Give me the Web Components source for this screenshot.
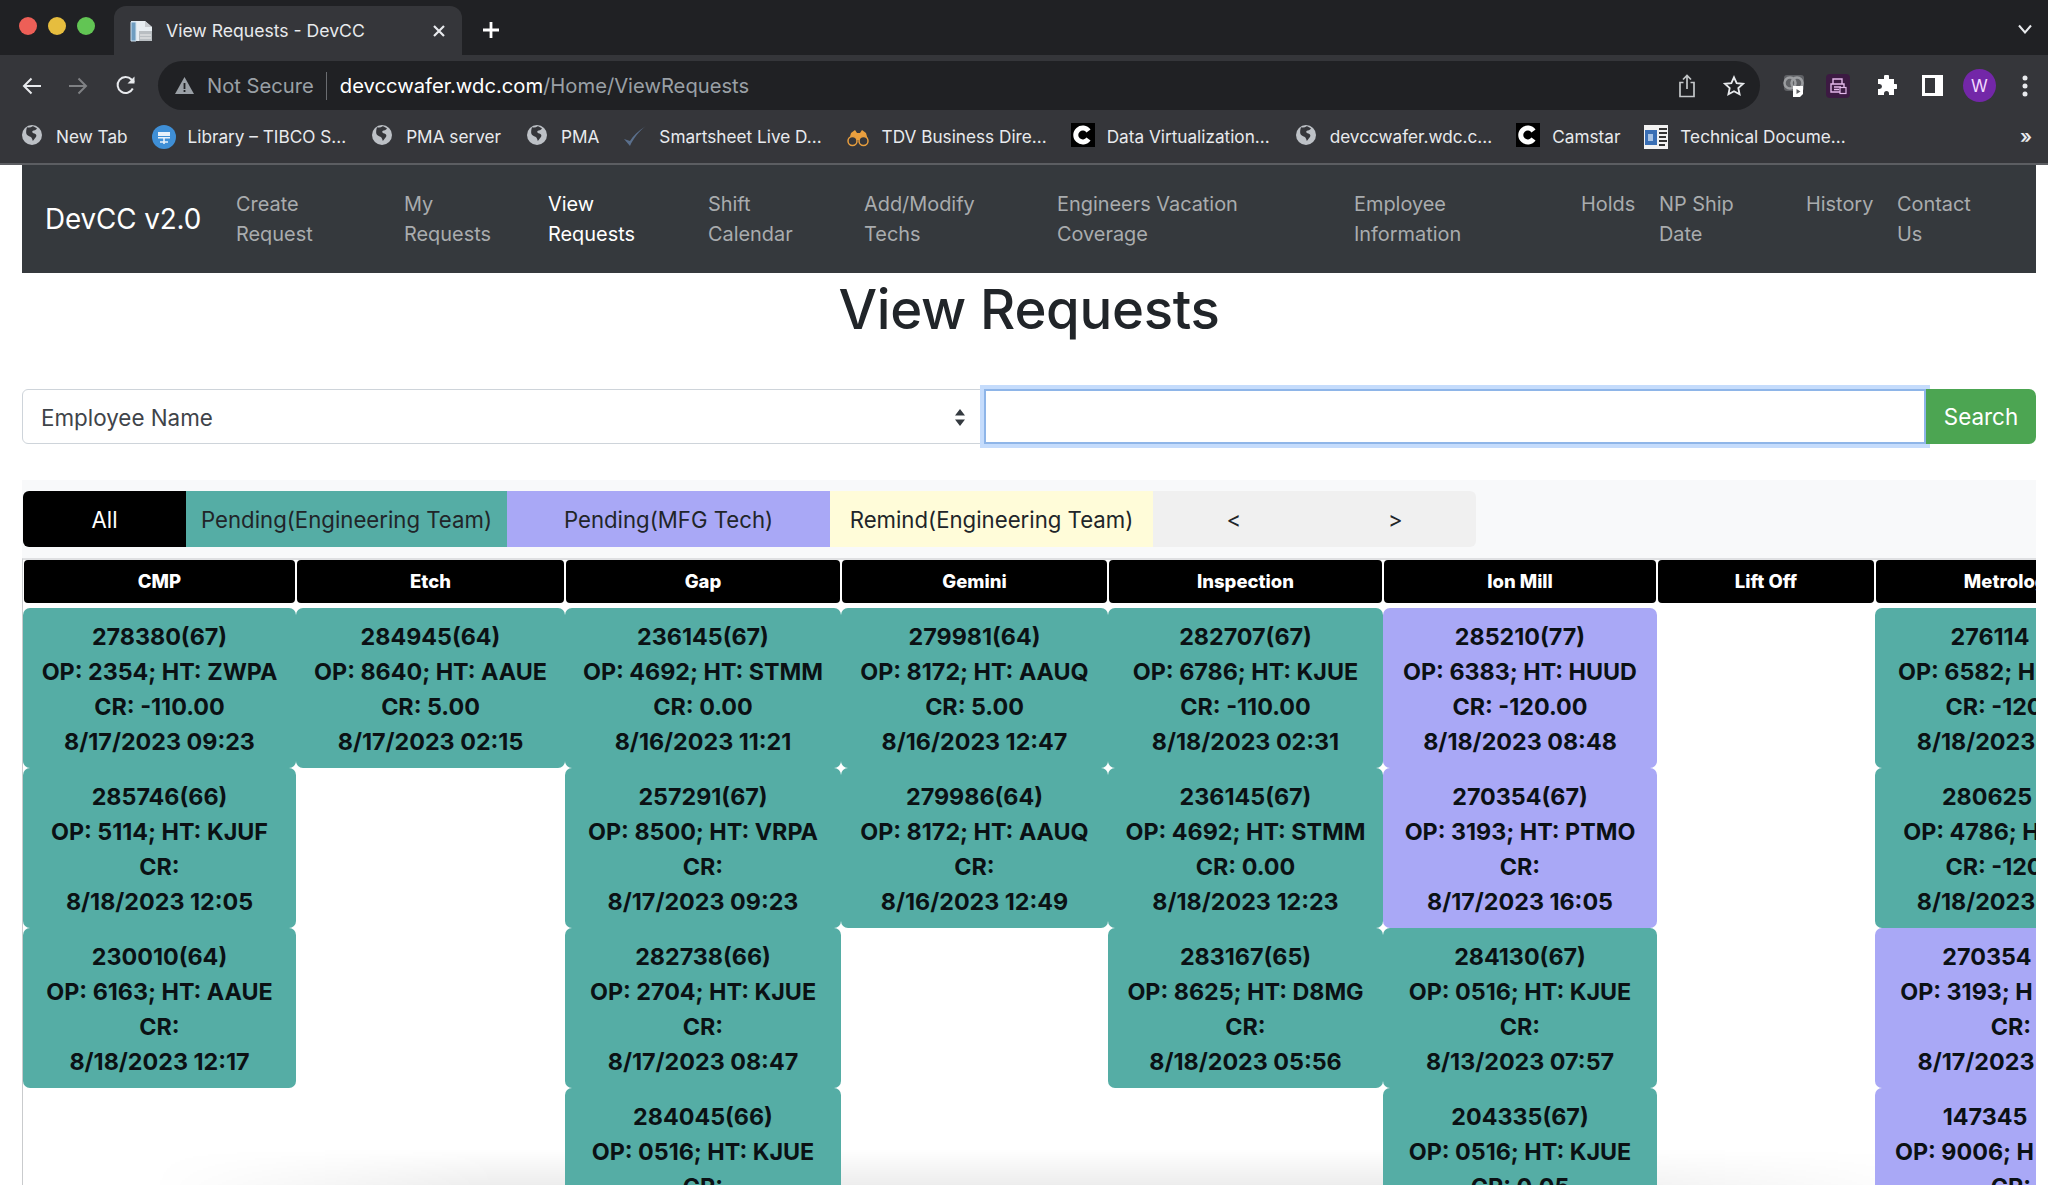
<!DOCTYPE html>
<html lang="en"><head><meta charset="utf-8"><title>View Requests - DevCC</title>
<style>html,body{margin:0;padding:0;background:#fff;font-family:Inter,"Liberation Sans",sans-serif}</style>
</head><body>
<app-page>
  <browser-chrome></browser-chrome>
  <dev-nav>
    <nav-link>Create<br>Request</nav-link>
    <nav-link>My<br>Requests</nav-link>
    <nav-link active>View<br>Requests</nav-link>
    <nav-link>Shift<br>Calendar</nav-link>
    <nav-link>Add/Modify<br>Techs</nav-link>
    <nav-link>Engineers Vacation<br>Coverage</nav-link>
    <nav-link>Employee<br>Information</nav-link>
    <nav-link>Holds</nav-link>
    <nav-link>NP Ship<br>Date</nav-link>
    <nav-link>History</nav-link>
    <nav-link>Contact<br>Us</nav-link>
  </dev-nav>
  <page-heading>View Requests</page-heading>
  <search-bar></search-bar>
  <status-filter>
    <filter-tab tone="all">All</filter-tab>
    <filter-tab tone="eng">Pending(Engineering Team)</filter-tab>
    <filter-tab tone="mfg">Pending(MFG Tech)</filter-tab>
    <filter-tab tone="remind">Remind(Engineering Team)</filter-tab>
    <filter-tab tone="nav">&lt;</filter-tab>
    <filter-tab tone="navend">&gt;</filter-tab>
  </status-filter>
  <request-board></request-board>
</app-page>

<script>
const def=(name,css,html,extra)=>{
  const t=document.createElement('template');
  t.innerHTML=`<style>${css}</style>${html}`;
  customElements.define(name,class extends HTMLElement{
    constructor(){super();this.attachShadow({mode:'open'}).appendChild(t.content.cloneNode(true));}
    connectedCallback(){if(extra)extra.call(this);}
  });
};

const globe=`<svg width="22" height="22" viewBox="0 0 22 22"><circle cx="11" cy="11" r="10" fill="#bdc1c6"/><path d="M6 3.2c2 .6 4 .3 5.6-.9 1.6.4 3.2 1.2 4.4 2.3-1 1.6-3 2-4.600 2.300-.6 1.400.6 2.200 2 2.600 1.600.5 2.400 1.700 1.800 3-1 1.800-2.200 3-3.400 4.600-.4-1.800-.8-3.400-2.400-4.400-1.700-.6-3.600-1.300-4.100-3.200C5 8 5.200 5.300 6 3.200z" fill="#35363a"/></svg>`;
const cLogo=`<svg width="24" height="24" viewBox="0 0 24 24"><rect width="24" height="24" fill="#000"/><path d="M17.500 8a7 7 0 1 0 0 8" fill="none" stroke="#fff" stroke-width="5"/></svg>`;

def('app-page',`:host{display:block;position:relative;width:2048px;height:1185px;overflow:hidden;background:#fff;font-family:Inter,"Liberation Sans",sans-serif;color:#212529}
.shade{position:absolute;left:0;right:0;bottom:0;height:36px;background:linear-gradient(to bottom,rgba(0,0,0,0),rgba(0,0,0,.07));-webkit-mask-image:linear-gradient(to right,transparent 150px,#000 500px,#000 1500px,transparent 1950px);mask-image:linear-gradient(to right,transparent 150px,#000 500px,#000 1500px,transparent 1950px);z-index:0;pointer-events:none}`,
`<slot></slot><div class="shade"></div>`);

def('bm-item',`:host{display:flex;align-items:center;gap:12px;color:#e8eaed;font-size:17.200px;white-space:nowrap}
.i{width:24px;height:24px;display:flex;align-items:center;justify-content:center}`,
`<span class="i"><slot name="icon"></slot></span><slot></slot>`);

def('browser-chrome',`:host{display:block;height:165px;background:#35363a;color:#e8eaed;box-sizing:border-box;border-bottom:2px solid #5c5e62;font-size:18px}
.strip{height:55px;background:#202124;display:flex;align-items:flex-end;position:relative}
.lights{display:flex;gap:11px;padding:0 0 20px 19px;width:96px;box-sizing:border-box;align-self:flex-end}
.lights i{width:18px;height:18px;border-radius:50%;flex:none}
.tab{width:348px;height:49px;background:#35363a;border-radius:12px 12px 0 0;display:flex;align-items:center;box-sizing:border-box;padding:0 16px;gap:12px;color:#e8eaed;font-size:17.600px;margin-left:18px}
.tab span{flex:1}
.plus{margin:0 0 3px 20px;height:44px;display:flex;align-items:center}
.chev{position:absolute;right:15px;top:24px}
.tool{height:55px;display:flex;align-items:flex-end;gap:0;padding-left:22px;box-sizing:border-box}
.nav{display:flex;align-items:center;height:49px;gap:26px;width:136px;flex:none}
.omni{flex:none;width:1602px;height:49px;background:#202124;border-radius:25px;display:flex;align-items:center;padding:0 16px 0 17px;box-sizing:border-box;font-size:20.200px;color:#9aa0a6;white-space:nowrap}
.omni b{font-weight:400;color:#fff}
.omni em{font-style:normal;width:1px;height:28px;background:#6a6c70;margin:0 13px 0 12px}
.omni .sp{flex:1}
.omni svg.w{margin-right:13px}
.ext{display:flex;align-items:center;height:49px;flex:none;padding-left:23px}
.bars{height:53px;display:flex;align-items:center;padding:0 16px 0 20px;gap:24px;position:relative}
.more{margin-left:auto;font-size:19px;color:#e8eaed;font-weight:600}
.ext>*{flex:none}
.ava{margin-left:20px;width:33px;height:33px;border-radius:50%;background:#7327a8;color:#f2d9ff;font-size:17px;display:flex;align-items:center;justify-content:center}`,
`<div class="strip">
  <div class="lights"><i style="background:#ed5f57"></i><i style="background:#e6bd3e"></i><i style="background:#62c554"></i></div>
  <div class="tab">
    <svg width="24" height="24" viewBox="0 0 24 24"><path d="M1 2h14l7 6v14H1z" fill="#e8eef2"/><path d="M1 3h5v19H1z" fill="#6f9dc0" stroke="#cfe0ee"/><path d="M9 12h13v10H9z" fill="#b9bec2"/><path d="M15 2v6h7" fill="#c8ccd0"/><path d="M10 16h11M10 19h11" stroke="#eee"/></svg>
    <span>View Requests - DevCC</span>
    <svg width="14" height="14" viewBox="0 0 14 14"><path d="M2 2l10 10M12 2L2 12" stroke="#e8eaed" stroke-width="2.200"/></svg>
  </div>
  <div class="plus"><svg width="18" height="18" viewBox="0 0 18 18"><path d="M9 1v16M1 9h16" stroke="#fff" stroke-width="2.800"/></svg></div>
  <svg class="chev" width="16" height="10" viewBox="0 0 16 10"><path d="M2 1.500l6 7 6-7" fill="none" stroke="#e8eaed" stroke-width="2"/></svg>
</div>
<div class="tool">
  <div class="nav">
    <svg width="20" height="20" viewBox="0 0 20 20"><path d="M19 10H2M9.500 2.500L2 10l7.500 7.500" fill="none" stroke="#e8eaed" stroke-width="2"/></svg>
    <svg width="20" height="20" viewBox="0 0 20 20"><path d="M1 10h17M10.500 2.500L18 10l-7.500 7.500" fill="none" stroke="#7f8184" stroke-width="2"/></svg>
    <svg style="margin-left:1px" width="21" height="21" viewBox="0 0 21 21"><path d="M17.800 13.500A8 8 0 1 1 16.500 4.500L19 7" fill="none" stroke="#e8eaed" stroke-width="2"/><path d="M19.500 1.500v7h-7z" fill="#e8eaed"/></svg>
  </div>
  <div class="omni">
    <svg class="w" width="19" height="17" viewBox="0 0 19 17"><path d="M9.500 0L19 17H0z" fill="#9aa0a6"/><path d="M9.500 6v6M9.500 13v2" stroke="#202124" stroke-width="1.800"/></svg>
    <span>Not Secure</span><em></em><span><b>devccwafer.wdc.com</b>/Home/ViewRequests</span>
    <span class="sp"></span>
    <svg width="18" height="24" viewBox="0 0 18 24" style="margin-right:27px"><path d="M5.500 8.500H2v14h14v-14h-3.500M9 15V2M5 5.500L9 1.500l4 4" fill="none" stroke="#c4c7c9" stroke-width="1.700"/></svg>
    <svg width="22" height="22" viewBox="0 0 24 24" style="margin-right:-1px"><path d="M12 2.500l2.900 6.300 6.900.8-5.100 4.700 1.400 6.800-6.100-3.400-6.100 3.400 1.400-6.800-5.100-4.700 6.900-.8z" fill="none" stroke="#e8eaed" stroke-width="2"/></svg>
  </div>
  <div class="ext">
    <svg width="22" height="24" viewBox="0 0 22 24"><rect x="1" y="1" width="20" height="16" rx="3" fill="#5f6165"/><circle cx="7" cy="9" r="5.500" fill="none" stroke="#9b9da0" stroke-width="2.500"/><circle cx="14" cy="9" r="5.500" fill="none" stroke="#9b9da0" stroke-width="2.500"/><path d="M10 12h10v8l-3 3h-7z" fill="#fff"/><path d="M13.500 15l4 2.500-4 2.500z" fill="#5f6165"/></svg>
    <svg style="margin-left:21px" width="24" height="24" viewBox="0 0 24 24"><rect width="24" height="24" rx="4" fill="#3c1a42"/><path d="M7 10V5h9v5M5 10h13v8H5zM8 13h7M8 15.500h5" fill="none" stroke="#e3b7ea" stroke-width="1.400"/><rect x="14" y="13.500" width="6" height="6" fill="#3c1a42" stroke="#e3b7ea" stroke-width="1.200"/></svg>
    <svg style="margin-left:26px" width="21" height="21" viewBox="0 0 21 21"><path d="M8 1.500a2.500 2.500 0 0 1 5 0.500V4h5v5h1.500a2.500 2.500 0 0 1 0 5H18v6h-5v-1.500a2.500 2.500 0 0 0-5 0V20H2v-6h1.500a2.500 2.500 0 0 0 0-5H2V4h6z" fill="#fff"/></svg>
    <svg style="margin-left:25px" width="21" height="21" viewBox="0 0 21 21"><rect width="21" height="21" fill="#fff"/><rect x="3" y="3" width="10" height="15" fill="#35363a"/></svg>
    <div class="ava">W</div>
    <svg style="margin-left:26px" width="6" height="22" viewBox="0 0 6 22"><circle cx="3" cy="3" r="2.500" fill="#e8eaed"/><circle cx="3" cy="11" r="2.500" fill="#e8eaed"/><circle cx="3" cy="19" r="2.500" fill="#e8eaed"/></svg>
  </div>
</div>
<div class="bars">
  <bm-item><span slot="icon">${globe}</span>New Tab</bm-item>
  <bm-item><svg slot="icon" width="24" height="24" viewBox="0 0 24 24"><circle cx="12" cy="12" r="12" fill="#3f8fd6"/><rect x="6" y="7" width="12" height="4" fill="#e8f1fa"/><rect x="6" y="12" width="12" height="1.500" fill="#e8f1fa"/><path d="M12 13v6M8 17h8" stroke="#e8f1fa" stroke-width="1.600"/></svg>Library – TIBCO S...</bm-item>
  <bm-item><span slot="icon">${globe}</span>PMA server</bm-item>
  <bm-item><span slot="icon">${globe}</span>PMA</bm-item>
  <bm-item><svg slot="icon" width="24" height="24" viewBox="0 0 24 24"><path d="M1 14l6 7C10 14 16 6 23 1 15 6 10 11 7 16z" fill="#5a6f8c"/></svg>Smartsheet Live D...</bm-item>
  <bm-item><svg slot="icon" width="24" height="24" viewBox="0 0 24 24"><path d="M5 8l4-3 2 3h3l2-3 4 3 2 7H3z" fill="#e99f3e"/><circle cx="6.500" cy="16" r="4.500" fill="#35363a" stroke="#e99f3e" stroke-width="1.500"/><circle cx="17.500" cy="16" r="4.500" fill="#35363a" stroke="#e99f3e" stroke-width="1.500"/></svg>TDV Business Dire...</bm-item>
  <bm-item><span slot="icon">${cLogo}</span>Data Virtualization...</bm-item>
  <bm-item><span slot="icon">${globe}</span>devccwafer.wdc.c...</bm-item>
  <bm-item><span slot="icon">${cLogo}</span>Camstar</bm-item>
  <bm-item><svg slot="icon" width="24" height="24" viewBox="0 0 24 24"><rect width="24" height="24" fill="#f2f2f2"/><rect x="1" y="5" width="12" height="15" fill="#3a6fb5"/><path d="M4 9h5v7H4z" fill="#a8c4e6"/><path d="M15 4h8M15 8h8M15 12h7M15 16h8M15 20h6" stroke="#333" stroke-width="2"/></svg>Technical Docume...</bm-item>
  <span class="more">»</span>
</div>`);

def('dev-nav',`:host{display:flex;align-items:center;height:108px;margin:0 12px 0 22px;background:#35393d;box-sizing:border-box;padding-left:23px}
.brand{color:#fff;font-size:27.800px;width:191px;flex:none;white-space:nowrap;letter-spacing:-.1px}
.links{display:grid;grid-template-columns:168px 144px 160px 156px 193px 297px 227px 78px 147px 91px auto}`,
`<div class="brand">DevCC v2.0</div><div class="links"><slot></slot></div>`);

def('nav-link',`:host{display:block;color:#a9acae;font-size:19.900px;line-height:30.500px;white-space:nowrap}
:host([active]){color:#fff}`,`<slot></slot>`);

def('page-heading',`:host{display:block;height:116px;box-sizing:border-box;text-align:center;margin:0 12px 0 22px;font-size:54.500px;font-weight:500;line-height:73px;color:#212529;letter-spacing:-.3px}`,`<slot></slot>`);

def('search-bar',`:host{display:flex;height:55px;margin:0 12px 0 22px;font-size:22.400px;color:#212529}
.sel{width:963px;box-sizing:border-box;border:1px solid #ced4da;border-radius:6px 0 0 6px;display:flex;align-items:center;justify-content:space-between;padding:1px 18px 0 18px;margin-right:-1px;color:#3f444a}
input{flex:1;min-width:0;box-sizing:border-box;border:2px solid #8eb5e8;outline:none;background:#fff;box-shadow:0 0 0 4px #c5dcfc;position:relative;z-index:1;margin:0;padding:0;font:inherit}
.btn{width:110px;background:#4ca552;color:#fff;border-radius:0 7px 7px 0;display:flex;align-items:center;justify-content:center;position:relative;z-index:2;font-size:22.400px}`,
`<div class="sel"><span>Employee Name</span><svg width="12" height="17" viewBox="0 0 12 17"><path d="M6 0l5 6.500H1zM6 17l-5-6.500h10z" fill="#343a40"/></svg></div><input type="text" aria-label="Search"><div class="btn">Search</div>`);

def('status-filter',`:host{display:block;margin:36px 12px 0 22px;padding:11px 0 11px 1px;background:#f8f9fa}
.row{display:flex;height:56px}`,`<div class="row"><slot></slot></div>`);

def('filter-tab',`:host{display:flex;align-items:center;justify-content:center;width:323px;font-size:22.200px;color:#212529;white-space:nowrap;box-sizing:border-box}
:host([tone=all]){width:163px;background:#000;color:#fff;border-radius:6px 0 0 6px}
:host([tone=eng]){width:321px;background:#55ada5}
:host([tone=mfg]){background:#a9a8f6}
:host([tone=remind]){background:#fffcd9}
:host([tone=nav]){width:161.500px;background:#f0f0f0}
:host([tone=navend]){width:161.500px;background:#f0f0f0;border-radius:0 6px 6px 0}`,`<slot></slot>`);

def('board-col',`:host{display:flex;flex-direction:column;flex:none}
.hd{height:43px;margin:0 1px 5px;background:#000;color:#fff;border-radius:4px;display:flex;align-items:center;justify-content:center;font-size:18.500px;font-weight:800;flex:none;padding-bottom:1px;box-sizing:border-box}`,
`<div class="hd"><slot name="title"></slot></div><slot></slot>`);

def('req-card',`:host{display:block;flex:none;height:160px;box-sizing:border-box;padding:11px 0 9px;border-radius:7px;background:#55ada5;color:#0b1114;text-align:center;font-size:23.300px;font-weight:700;line-height:35px;white-space:nowrap;overflow:hidden}
:host([tone=mfg]){background:#a9a8f6}`,`<slot></slot>`);

const tail=w=>`<span style="display:inline-block;width:${w}px"></span>`;
const c=(id,op,ht,cr,dt,tone)=>({lines:[id,`OP: ${op}; HT: ${ht}`,`CR:${cr?' '+cr:''}`,dt].filter(x=>x!==null),tone});
const COLS=[
 ['CMP',273,[c('278380(67)','2354','ZWPA','-110.00','8/17/2023 09:23'),c('285746(66)','5114','KJUF','','8/18/2023 12:05'),c('230010(64)','6163','AAUE','','8/18/2023 12:17')]],
 ['Etch',269,[c('284945(64)','8640','AAUE','5.00','8/17/2023 02:15')]],
 ['Gap',276,[c('236145(67)','4692','STMM','0.00','8/16/2023 11:21'),c('257291(67)','8500','VRPA','','8/17/2023 09:23'),c('282738(66)','2704','KJUE','','8/17/2023 08:47'),c('284045(66)','0516','KJUE','',null)]],
 ['Gemini',267,[c('279981(64)','8172','AAUQ','5.00','8/16/2023 12:47'),c('279986(64)','8172','AAUQ','','8/16/2023 12:49')]],
 ['Inspection',275,[c('282707(67)','6786','KJUE','-110.00','8/18/2023 02:31'),c('236145(67)','4692','STMM','0.00','8/18/2023 12:23'),c('283167(65)','8625','D8MG','','8/18/2023 05:56')]],
 ['Ion Mill',274,[c('285210(77)','6383','HUUD','-120.00','8/18/2023 08:48','mfg'),c('270354(67)','3193','PTMO','','8/17/2023 16:05','mfg'),c('284130(67)','0516','KJUE','','8/13/2023 07:57'),c('204335(67)','0516','KJUE','0.05',null)]],
 ['Lift Off',218,[]],
 ['Metrology',272,[
   {lines:['276114'+tail(42),'OP: 6582; H'+tail(89),'CR: -120'+tail(34),'8/18/2023'+tail(70)]},
   {lines:['280625'+tail(48),'OP: 4786; H'+tail(79),'CR: -120'+tail(34),'8/18/2023'+tail(70)]},
   {lines:['270354'+tail(48),'OP: 3193; H'+tail(89),'CR:','8/17/2023'+tail(70)],tone:'mfg'},
   {lines:['147345'+tail(52),'OP: 9006; H'+tail(93),'CR:'],tone:'mfg'}]],
];

def('request-board',`:host{display:flex;height:627px;border-top:2px solid #dfe0e2;border-left:1px solid #c9cbcd;margin:0 12px 0 22px;overflow:hidden;position:relative;z-index:1}`,`<slot></slot>`,function(){
  if(this.children.length)return;
  for(const [title,w,cards] of COLS){
    const col=document.createElement('board-col');
    col.style.width=w+'px';
    const t=document.createElement('span');t.slot='title';t.textContent=title;col.appendChild(t);
    for(const d of cards){
      const r=document.createElement('req-card');
      if(d.tone)r.setAttribute('tone',d.tone);
      r.innerHTML=d.lines.map(l=>`<div>${l}</div>`).join('');
      col.appendChild(r);
    }
    this.appendChild(col);
  }
});
</script>
</body></html>
